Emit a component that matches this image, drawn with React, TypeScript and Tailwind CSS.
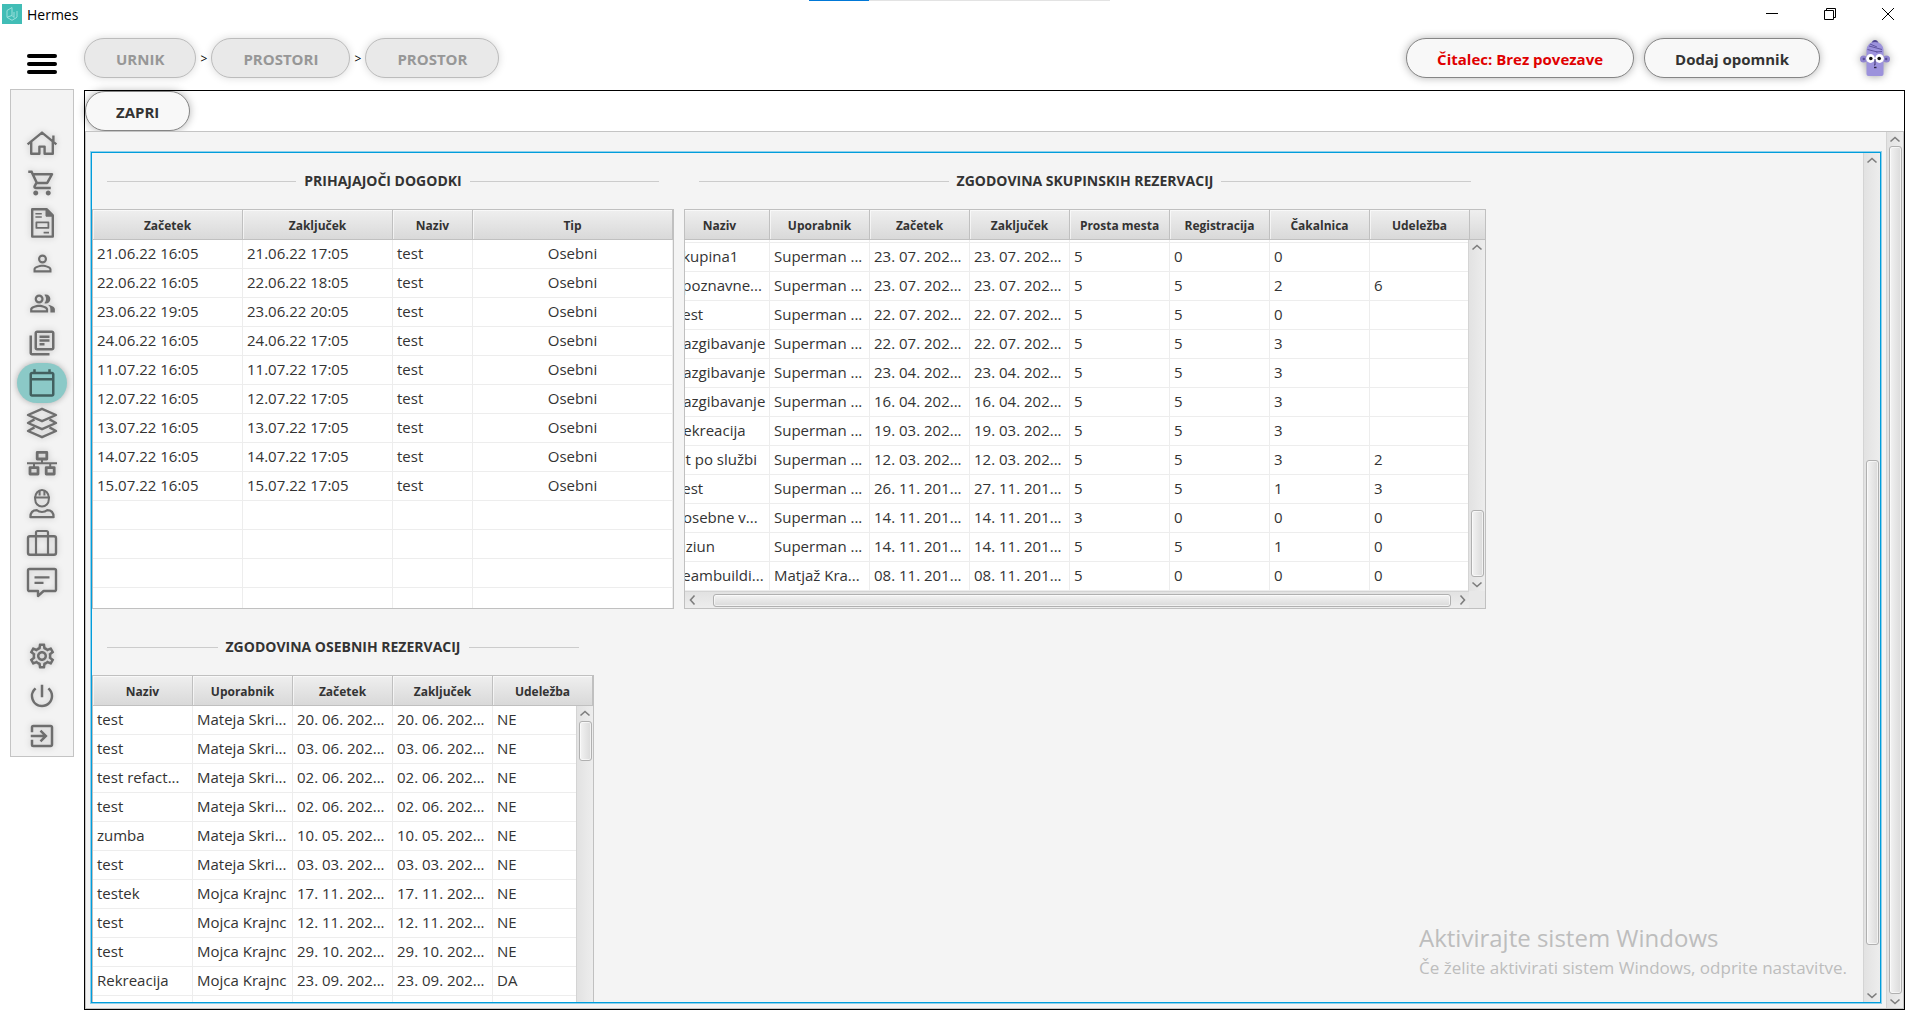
import React from "react";
import {
  MdExitToApp,
  MdOutlineCalendarToday,
  MdOutlineLibraryBooks,
  MdOutlinePeopleAlt,
  MdOutlineSettings,
  MdOutlineShoppingCart,
  MdPersonOutline,
  MdPowerSettingsNew,
} from "react-icons/md";

type Column = { label: string; width: number; center?: boolean };

/* ---------- icons ---------- */

function Drawing({ children }: { children: React.ReactNode }) {
  return (
    <svg
      viewBox="0 0 40 40"
      className="size-10"
      fill="none"
      stroke="currentColor"
      strokeWidth="2.4"
      strokeLinejoin="round"
    >
      {children}
    </svg>
  );
}

const HomeIcon = (
  <Drawing>
    <path d="M5.6 21.4 20 9.6l14.4 11.8M31.4 19v-6.600M9.2 18.800v12h8.200v-7.200h5.200v7.200h8.200v-12" />
  </Drawing>
);

const DocumentIcon = (
  <Drawing>
    <path d="M10.200 6.200h14.400l6.200 6.200v21.200H10.200z" />
    <path d="M24 6.200v7h7z" fill="currentColor" strokeWidth="1" />
    <path d="M13.400 10.700h6.400M13.400 14h6.400M21.600 29.600H27" strokeWidth="1.600" />
    <path d="M14.400 19.300h12v5.600h-12z" strokeWidth="1.800" />
  </Drawing>
);

const LayersIcon = (
  <Drawing>
    <path d="M20 5.800 34 12l-14 6.200L6 12z" />
    <path d="M12.500 16.400 6 20l14 6.200L34 20l-6.500-3.600" />
    <path d="M12.500 24.400 6 28l14 6.200L34 28l-6.500-3.600" />
  </Drawing>
);

const NetworkIcon = (
  <Drawing>
    <path d="M15.200 9.400h9.600V16h-9.600zM8 24.600h8V31H8zM24.200 24.600h8V31h-8z" strokeWidth="2.800" />
    <path d="M20 16v4M5 20.200h30M12 20v4M28.200 20v4" strokeWidth="2" />
  </Drawing>
);

const WorkerIcon = (
  <Drawing>
    <path d="M13.200 14.600a6.800 7.600 0 0 1 13.600 0v1.800a6.800 7.200 0 0 1-13.600 0z" strokeWidth="2" />
    <path d="M12 14.600h16M17.600 7v5.500M22.400 7v5.500" strokeWidth="2" />
    <path d="M8.400 34.200c0-5.200 2.600-7 6.600-7 2.400 2.400 7.600 2.400 10 0 4 0 6.600 1.800 6.600 7z" strokeWidth="2.200" />
  </Drawing>
);

const SuitcaseIcon = (
  <Drawing>
    <rect x="6" y="13.200" width="28" height="18.600" rx="2" />
    <path d="M14 31.800V9.600Q14 8 15.600 8h8.800Q26 8 26 9.600v22.200" strokeWidth="2.200" />
  </Drawing>
);

const ChatIcon = (
  <Drawing>
    <path d="M7.600 6h24.800Q34 6 34 7.600v18.800q0 1.600-1.600 1.600H21.600L16 33v-5H7.600Q6 28 6 26.400V7.600Q6 6 7.600 6z" />
    <path d="M12.500 14.400h15M12.500 19.800h9" strokeWidth="2.200" />
  </Drawing>
);

const mainNav = [
  { label: "Domov", icon: HomeIcon },
  { label: "Prodaja", icon: <MdOutlineShoppingCart size={30} /> },
  { label: "Računi", icon: DocumentIcon },
  { label: "Stranka", icon: <MdPersonOutline size={27} /> },
  { label: "Stranke", icon: <MdOutlinePeopleAlt size={27} /> },
  { label: "Knjižnica", icon: <MdOutlineLibraryBooks size={30} /> },
  { label: "Urnik", icon: <MdOutlineCalendarToday size={30} />, active: true },
  { label: "Sloji", icon: LayersIcon },
  { label: "Organizacija", icon: NetworkIcon },
  { label: "Zaposleni", icon: WorkerIcon },
  { label: "Posel", icon: SuitcaseIcon },
  { label: "Sporočila", icon: ChatIcon },
];

const systemNav = [
  { label: "Nastavitve", icon: <MdOutlineSettings size={30} /> },
  { label: "Izklop", icon: <MdPowerSettingsNew size={30} /> },
  { label: "Odjava", icon: <MdExitToApp size={30} /> },
];

function NavButton({ label, icon, active }: { label: string; icon: React.ReactNode; active?: boolean }) {
  return (
    <button
      type="button"
      aria-label={label}
      className={
        active
          ? "flex h-10 w-[50px] items-center justify-center rounded-[20px] bg-[#8bc9c7] text-[#42605f] shadow-[0_0_6px_rgba(0,0,0,0.3)]"
          : "flex h-10 w-[50px] items-center justify-center text-[#6e6e6e] drop-shadow-[0_0_3px_rgba(0,0,0,0.2)]"
      }
    >
      {icon}
    </button>
  );
}

/* ---------- scroll bars ---------- */

const arrowPaths = {
  up: "M1.5 6.5 6 2.5l4.500 4",
  down: "M1.5 2.5 6 6.5l4.500-4",
  left: "M6.5 1.5 2.5 6l4 4.500",
  right: "M2.5 1.5 6.5 6l-4 4.500",
};

function Arrow({ dir }: { dir: keyof typeof arrowPaths }) {
  const vertical = dir === "up" || dir === "down";
  return (
    <button
      type="button"
      aria-label={dir}
      className={
        vertical
          ? "flex h-3.5 w-4 shrink-0 items-center justify-center text-[#7d7d7d]"
          : "flex h-4 w-3.5 shrink-0 items-center justify-center text-[#7d7d7d]"
      }
    >
      <svg
        viewBox={vertical ? "0 0 12 9" : "0 0 9 12"}
        className={vertical ? "h-[9px] w-3" : "h-3 w-[9px]"}
        fill="none"
        stroke="currentColor"
        strokeWidth="1.6"
      >
        <path d={arrowPaths[dir]} />
      </svg>
    </button>
  );
}

function VBar({ before, thumb, after }: { before: number; thumb: number; after: number }) {
  return (
    <div className="flex h-full w-[17px] flex-col items-center border-l border-[#d4d4d4] bg-linear-to-r from-[#e2e2e2] to-[#ededed]">
      <Arrow dir="up" />
      <div className="flex w-full flex-1 flex-col items-center">
        <div style={{ flexGrow: before }} />
        <div
          style={{ flexGrow: thumb }}
          className="w-[13px] rounded-[3px] border border-[#b0b0b0] bg-linear-to-r from-[#f3f3f3] to-[#dadada] shadow-[inset_0_0_0_1px_rgba(255,255,255,0.6)]"
        />
        <div style={{ flexGrow: after }} />
      </div>
      <Arrow dir="down" />
    </div>
  );
}

function HBar({ before, thumb, after }: { before: number; thumb: number; after: number }) {
  return (
    <div className="flex h-[17px] w-full items-center border-t border-[#d4d4d4] bg-linear-to-b from-[#e2e2e2] to-[#ededed]">
      <Arrow dir="left" />
      <div className="flex h-full flex-1 items-center">
        <div style={{ flexGrow: before }} />
        <div
          style={{ flexGrow: thumb }}
          className="h-[13px] rounded-[3px] border border-[#b0b0b0] bg-linear-to-b from-[#f3f3f3] to-[#dadada] shadow-[inset_0_0_0_1px_rgba(255,255,255,0.6)]"
        />
        <div style={{ flexGrow: after }} />
      </div>
      <Arrow dir="right" />
    </div>
  );
}

/* ---------- tables ---------- */

function DataTable({
  title,
  columns,
  rows,
  emptyRows = 0,
  scrolled = false,
}: {
  title: string;
  columns: Column[];
  rows: string[][];
  emptyRows?: number;
  scrolled?: boolean;
}) {
  const total = columns.reduce((sum, c) => sum + c.width, 0);
  const blanks = Array.from({ length: emptyRows }, () => columns.map(() => ""));
  return (
    <table
      aria-label={title}
      className="shrink-0 table-fixed border-separate border-spacing-0 bg-white"
      style={{ width: total }}
    >
      <colgroup>
        {columns.map((c) => (
          <col key={c.label} style={{ width: c.width }} />
        ))}
      </colgroup>
      <thead>
        <tr>
          {columns.map((c) => (
            <th
              key={c.label}
              className="h-[30px] border-r border-b border-[#c0c0c0] bg-linear-to-b from-[#efefef] to-[#d9d9d9] px-0 pt-0.5 pb-0 text-center text-xs font-bold shadow-[inset_1px_1px_0_rgba(255,255,255,0.6)]"
            >
              {c.label}
            </th>
          ))}
        </tr>
      </thead>
      <tbody>
        {scrolled && (
          <tr aria-hidden="true">
            {columns.map((c) => (
              <td key={c.label} className="h-[3px] border-r border-b border-[#ededed] p-0" />
            ))}
          </tr>
        )}
        {[...rows, ...blanks].map((row, i) => (
          <tr key={i}>
            {row.map((cell, j) => (
              <td
                key={j}
                className={
                  columns[j].center
                    ? "h-[29px] truncate border-r border-b border-[#ededed] px-1 pt-0 pb-0.5 text-center text-[15px] leading-5"
                    : "h-[29px] truncate border-r border-b border-[#ededed] pt-0 pr-0 pb-0.5 pl-1 text-left text-[15px] leading-5"
                }
              >
                {cell}
              </td>
            ))}
          </tr>
        ))}
      </tbody>
    </table>
  );
}

function Group({ title, children }: { title: string; children: React.ReactNode }) {
  return (
    <section className="flex flex-col">
      <div className="flex h-14 items-center gap-2 px-[15px]">
        <span className="h-px flex-1 bg-[#cccccc]" />
        <h2 className="text-sm font-bold">{title}</h2>
        <span className="h-px flex-1 bg-[#cccccc]" />
      </div>
      {children}
    </section>
  );
}

const upcomingColumns: Column[] = [
  { label: "Začetek", width: 150 },
  { label: "Zaključek", width: 150 },
  { label: "Naziv", width: 80 },
  { label: "Tip", width: 200, center: true },
];

const upcomingRows = [
  ["21.06.22 16:05", "21.06.22 17:05", "test", "Osebni"],
  ["22.06.22 16:05", "22.06.22 18:05", "test", "Osebni"],
  ["23.06.22 19:05", "23.06.22 20:05", "test", "Osebni"],
  ["24.06.22 16:05", "24.06.22 17:05", "test", "Osebni"],
  ["11.07.22 16:05", "11.07.22 17:05", "test", "Osebni"],
  ["12.07.22 16:05", "12.07.22 17:05", "test", "Osebni"],
  ["13.07.22 16:05", "13.07.22 17:05", "test", "Osebni"],
  ["14.07.22 16:05", "14.07.22 17:05", "test", "Osebni"],
  ["15.07.22 16:05", "15.07.22 17:05", "test", "Osebni"],
];

const groupColumns: Column[] = [
  { label: "Naziv", width: 100 },
  { label: "Uporabnik", width: 100 },
  { label: "Začetek", width: 100 },
  { label: "Zaključek", width: 100 },
  { label: "Prosta mesta", width: 100 },
  { label: "Registracija", width: 100 },
  { label: "Čakalnica", width: 100 },
  { label: "Udeležba", width: 100 },
];

const groupRows = [
  ["Skupina1", "Superman ...", "23. 07. 202...", "23. 07. 202...", "5", "0", "0", ""],
  ["Spoznavne...", "Superman ...", "23. 07. 202...", "23. 07. 202...", "5", "5", "2", "6"],
  ["Test", "Superman ...", "22. 07. 202...", "22. 07. 202...", "5", "5", "0", ""],
  ["Razgibavanje", "Superman ...", "22. 07. 202...", "22. 07. 202...", "5", "5", "3", ""],
  ["Razgibavanje", "Superman ...", "23. 04. 202...", "23. 04. 202...", "5", "5", "3", ""],
  ["Razgibavanje", "Superman ...", "16. 04. 202...", "16. 04. 202...", "5", "5", "3", ""],
  ["Rekreacija", "Superman ...", "19. 03. 202...", "19. 03. 202...", "5", "5", "3", ""],
  ["Fit po službi", "Superman ...", "12. 03. 202...", "12. 03. 202...", "5", "5", "3", "2"],
  ["Test", "Superman ...", "26. 11. 201...", "27. 11. 201...", "5", "5", "1", "3"],
  ["Posebne v...", "Superman ...", "14. 11. 201...", "14. 11. 201...", "3", "0", "0", "0"],
  ["Oziun", "Superman ...", "14. 11. 201...", "14. 11. 201...", "5", "5", "1", "0"],
  ["Teambuildi...", "Matjaž Kra...", "08. 11. 201...", "08. 11. 201...", "5", "0", "0", "0"],
];

const personalColumns: Column[] = [
  { label: "Naziv", width: 100 },
  { label: "Uporabnik", width: 100 },
  { label: "Začetek", width: 100 },
  { label: "Zaključek", width: 100 },
  { label: "Udeležba", width: 100 },
];

const personalRows = [
  ["test", "Mateja Skri...", "20. 06. 202...", "20. 06. 202...", "NE"],
  ["test", "Mateja Skri...", "03. 06. 202...", "03. 06. 202...", "NE"],
  ["test refact...", "Mateja Skri...", "02. 06. 202...", "02. 06. 202...", "NE"],
  ["test", "Mateja Skri...", "02. 06. 202...", "02. 06. 202...", "NE"],
  ["zumba", "Mateja Skri...", "10. 05. 202...", "10. 05. 202...", "NE"],
  ["test", "Mateja Skri...", "03. 03. 202...", "03. 03. 202...", "NE"],
  ["testek", "Mojca Krajnc", "17. 11. 202...", "17. 11. 202...", "NE"],
  ["test", "Mojca Krajnc", "12. 11. 202...", "12. 11. 202...", "NE"],
  ["test", "Mojca Krajnc", "29. 10. 202...", "29. 10. 202...", "NE"],
  ["Rekreacija", "Mojca Krajnc", "23. 09. 202...", "23. 09. 202...", "DA"],
];

/* ---------- header ---------- */

function Crumb({ children }: { children: React.ReactNode }) {
  return (
    <button
      type="button"
      disabled
      className="h-10 rounded-[20px] border border-[#bcbcbc] bg-[#e9e9e9] px-[31px] pt-0.5 text-[15px] font-bold text-[#979797] shadow-[0_0_8px_rgba(0,0,0,0.15)]"
    >
      {children}
    </button>
  );
}

function PillButton({ children, danger }: { children: React.ReactNode; danger?: boolean }) {
  return (
    <button
      type="button"
      className={
        danger
          ? "h-10 rounded-[20px] border border-[#858585] bg-[#f8f8f8] px-[30px] pt-0.5 text-[15px] font-bold text-[#e00000] shadow-[0_0_8px_rgba(0,0,0,0.3)]"
          : "h-10 rounded-[20px] border border-[#858585] bg-[#f8f8f8] px-[30px] pt-0.5 text-[15px] font-bold text-[#333333] shadow-[0_0_8px_rgba(0,0,0,0.3)]"
      }
    >
      {children}
    </button>
  );
}

function Avatar() {
  return (
    <svg viewBox="0 0 32 38" className="h-[38px] w-8 drop-shadow-[0_0_4px_rgba(0,0,0,0.4)]" aria-label="Profil">
      <path d="M12.500 4Q13.500 1 16 1t3.500 3z" fill="#4f4590" />
      <circle cx="4.500" cy="20" r="3.500" fill="#8f84cf" />
      <circle cx="27.500" cy="20" r="3.500" fill="#8f84cf" />
      <circle cx="4.800" cy="20" r="1.200" fill="#564c94" />
      <circle cx="27.200" cy="20" r="1.200" fill="#564c94" />
      <path d="M7.500 35V11q1-8 8.500-8t8.500 8v24q0 2-2 2h-13q-2 0-2-2z" fill="#9c92dc" />
      <path d="m10 7 13 3.500M8.500 10.500l10 2.500M11 5l7 3M17 13l6-.5" stroke="#5f549f" strokeWidth="1" />
      <circle cx="11.500" cy="19.500" r="4.400" fill="#fff" />
      <circle cx="20.500" cy="19.500" r="4.400" fill="#fff" />
      <circle cx="11.800" cy="19.500" r="1.800" fill="#111" />
      <circle cx="20.200" cy="19.500" r="1.800" fill="#111" />
      <path d="M16 20v6h-1" stroke="#40356e" strokeWidth="1" fill="none" />
      <path d="M15 28.500h2.500" stroke="#2a2244" strokeWidth="1.400" />
    </svg>
  );
}

export default function App() {
  return (
    <div className="relative flex h-screen flex-col overflow-hidden bg-white font-['Open_Sans','Noto_Sans',sans-serif] text-[#333333]">
      <div className="absolute top-0 left-[calc(50%-151px)] flex h-px w-[301px]">
        <div className="w-[60px] bg-[#0078d7]" />
        <div className="flex-1 bg-[#e3e3e3]" />
      </div>

      <div className="flex h-7 shrink-0 items-center justify-between pr-[26px] pl-0.5">
        <div className="flex items-center gap-[5px]">
          <svg viewBox="0 0 20 20" className="size-5">
            <rect width="20" height="20" fill="#41bdb6" />
            <path
              d="M10 3.500 5 6.500v6.800l5 3 5-3M10 3.500v8L5.500 13M10 11.500l2 2V8M15 7v6"
              fill="none"
              stroke="#a5e3df"
              strokeWidth=".9"
            />
          </svg>
          <span className="pt-0.5 text-sm text-black">Hermes</span>
        </div>
        <div className="flex items-center gap-[46px] text-black">
          <button type="button" aria-label="Minimiziraj">
            <svg viewBox="0 0 12 12" className="size-3" stroke="currentColor">
              <path d="M0 5.500h12" />
            </svg>
          </button>
          <button type="button" aria-label="Obnovi">
            <svg viewBox="0 0 12 12" className="size-3" fill="none" stroke="currentColor">
              <path d="M.5 2.500h9v9h-9zM2.500 2.500v-2h9v9h-2" />
            </svg>
          </button>
          <button type="button" aria-label="Zapri okno">
            <svg viewBox="0 0 12 12" className="size-3" stroke="currentColor">
              <path d="m0 0 12 12M12 0 0 12" />
            </svg>
          </button>
        </div>
      </div>

      <header className="flex shrink-0 items-center pt-2.5 pb-[11px]">
        <div className="flex w-[84px] justify-center pt-3">
          <button type="button" aria-label="Meni" className="flex w-[30px] flex-col gap-1">
            <span className="h-1 rounded-xs bg-black" />
            <span className="h-1 rounded-xs bg-black" />
            <span className="h-1 rounded-xs bg-black" />
          </button>
        </div>
        <nav className="flex items-center text-xs">
          <Crumb>URNIK</Crumb>
          <span className="w-[15px] pt-0.5 text-center text-black">&gt;</span>
          <Crumb>PROSTORI</Crumb>
          <span className="w-[15px] pt-0.5 text-center text-black">&gt;</span>
          <Crumb>PROSTOR</Crumb>
        </nav>
        <div className="ml-auto flex items-center gap-2.5 pr-[29px]">
          <PillButton danger>Čitalec: Brez povezave</PillButton>
          <PillButton>Dodaj opomnik</PillButton>
          <div className="pl-[29px]">
            <Avatar />
          </div>
        </div>
      </header>

      <div className="flex min-h-0 flex-1 gap-2.5 pr-[15px] pb-[15px] pl-2.5">
        <aside className="flex w-16 shrink-0 flex-col items-center self-start border border-[#c4c4c4] bg-[#f3f3f3] pt-[33px]">
          {mainNav.map((item) => (
            <NavButton key={item.label} {...item} />
          ))}
          <div className="h-[33px]" />
          {systemNav.map((item) => (
            <NavButton key={item.label} {...item} />
          ))}
        </aside>

        <main className="mt-px flex min-w-0 flex-1 flex-col border border-black">
          <div className="shrink-0">
            <PillButton>ZAPRI</PillButton>
          </div>
          <div className="flex min-h-0 flex-1 border border-[#c4c4c4] bg-[#f4f4f4]">
            <div className="flex min-w-0 flex-1 px-[5px] pt-5 pb-[5px]">
              <div className="relative flex min-w-0 flex-1 border border-[#009ddc] shadow-[0_0_0_1px_#8fd0ea]">
                <div className="flex min-w-0 flex-1 flex-wrap content-start gap-2.5 overflow-hidden">
                  <Group title="PRIHAJAJOČI DOGODKI">
                    <div className="h-[400px] overflow-hidden border border-[#c0c0c0] bg-white">
                      <DataTable title="Prihajajoči dogodki" columns={upcomingColumns} rows={upcomingRows} emptyRows={4} />
                    </div>
                  </Group>

                  <Group title="ZGODOVINA SKUPINSKIH REZERVACIJ">
                    <div className="relative flex h-[400px] w-[802px] items-start overflow-hidden border border-[#c0c0c0] bg-white">
                      <div className="flex min-w-0 flex-1 items-start justify-end overflow-hidden">
                        <DataTable
                          title="Zgodovina skupinskih rezervacij"
                          columns={groupColumns}
                          rows={groupRows}
                          scrolled
                        />
                      </div>
                      <div className="h-[30px] w-[15px] border-b border-[#c0c0c0] bg-linear-to-b from-[#efefef] to-[#d9d9d9]" />
                      <div className="absolute top-[30px] right-0 bottom-[17px]">
                        <VBar before={258} thumb={65} after={0} />
                      </div>
                      <div className="absolute right-0 bottom-0 left-0 flex bg-[#e8e8e8] pr-4">
                        <HBar before={14} thumb={738} after={4} />
                      </div>
                    </div>
                  </Group>

                  <Group title="ZGODOVINA OSEBNIH REZERVACIJ">
                    <div className="relative h-[400px] overflow-hidden border border-[#c0c0c0] bg-white">
                      <DataTable
                        title="Zgodovina osebnih rezervacij"
                        columns={personalColumns}
                        rows={personalRows}
                        emptyRows={3}
                      />
                      <div className="absolute top-[30px] right-0 bottom-0">
                        <VBar before={1} thumb={38} after={301} />
                      </div>
                    </div>
                  </Group>
                </div>
                <VBar before={294} thumb={484} after={43} />
                <div className="absolute right-[37px] bottom-5 w-[424px] text-[#bdbdbd]">
                  <p className="text-2xl leading-8 whitespace-nowrap">Aktivirajte sistem Windows</p>
                  <p className="text-[17px] leading-7 whitespace-nowrap">
                    Če želite aktivirati sistem Windows, odprite nastavitve.
                  </p>
                </div>
              </div>
            </div>
            <VBar before={0} thumb={846} after={0} />
          </div>
        </main>
      </div>
    </div>
  );
}
